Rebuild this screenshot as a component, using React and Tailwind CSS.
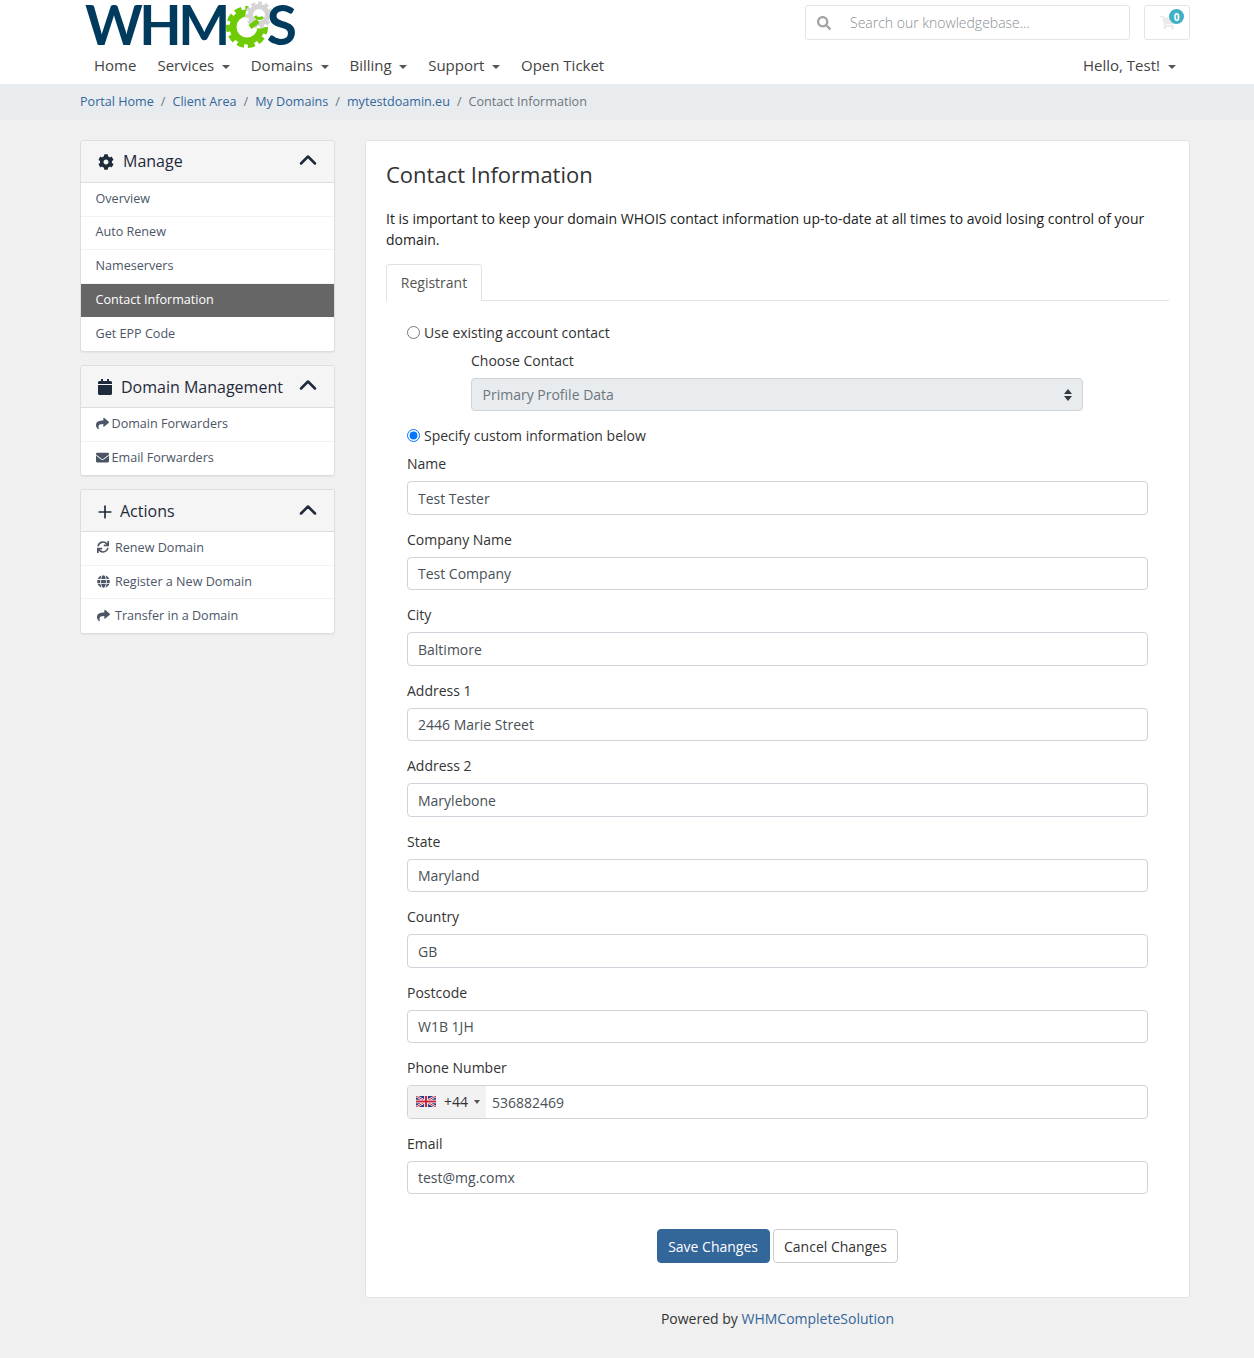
import React from "react";
import { ChevronUp, Plus } from "lucide-react";
import { FaCog, FaCalendar, FaShare, FaEnvelope, FaSync, FaGlobe, FaSearch, FaShoppingCart } from "react-icons/fa";

const fields = [
  ["Name", "Test Tester"],
  ["Company Name", "Test Company"],
  ["City", "Baltimore"],
  ["Address 1", "2446 Marie Street"],
  ["Address 2", "Marylebone"],
  ["State", "Maryland"],
  ["Country", "GB"],
  ["Postcode", "W1B 1JH"],
];

function Caret() {
  return <span className="ml-[7.5px] inline-block border-x-[4px] border-t-[4px] border-x-transparent border-t-[#555] align-middle" />;
}

function Panel({ icon, title, gap = "gap-[9px]", children }) {
  return (
    <div className="mb-[13px] overflow-hidden rounded-[3px] border border-[#ddd] bg-white shadow-[0_1px_1px_rgba(0,0,0,0.05)]">
      <div className={`flex h-[42px] items-center border-b border-[#ddd] bg-[#f5f5f5] pl-[17px] pr-[12px] text-[#1f2a3a] ${gap}`}>
        {icon}
        <span className="text-[16px]">{title}</span>
        <ChevronUp className="ml-auto -translate-y-[2px]" size={28} strokeWidth={2.2} />
      </div>
      {children}
    </div>
  );
}

function Item({ icon, active, last, children }) {
  return (
    <div
      className={`flex h-[33.6px] items-center px-[14.5px] pb-[2px] text-[12.6px] ${
        active ? "bg-[#666] text-white" : "text-[#4c5566]"
      } ${last || active ? "" : "border-b border-[#f3f3f3]"}`}
    >
      {icon}
      {children}
    </div>
  );
}

function GearLogo() {
  return (
    <svg width="48" height="50" viewBox="0 0 48 50" className="-mx-[1px] shrink-0">
      <circle cx="21" cy="27" r="14" fill="none" stroke="#6fcb05" strokeWidth="7" />
      <circle cx="21" cy="27" r="19" fill="none" stroke="#6fcb05" strokeWidth="4" strokeDasharray="7 3.9" />
      <circle cx="33" cy="15" r="13.5" fill="#fff" />
      <circle cx="33" cy="15" r="8.5" fill="none" stroke="#d4d4d4" strokeWidth="5" />
      <circle cx="33" cy="15" r="12" fill="none" stroke="#d4d4d4" strokeWidth="3" strokeDasharray="4 2.9" />
      <path d="M24 27 L32 21" stroke="#6fcb05" strokeWidth="5" />
      <path d="M29 16 a5 5 0 0 0 8 1" fill="none" stroke="#6fcb05" strokeWidth="3" />
    </svg>
  );
}

function UkFlag() {
  return (
    <svg width="20" height="11" viewBox="0 0 60 33">
      <rect width="60" height="33" fill="#2b3f80" />
      <path d="M0 0 L60 33 M60 0 L0 33" stroke="#fff" strokeWidth="7" />
      <path d="M0 0 L60 33 M60 0 L0 33" stroke="#c8283f" strokeWidth="3" />
      <path d="M30 0 V33 M0 16.5 H60" stroke="#fff" strokeWidth="11" />
      <path d="M30 0 V33 M0 16.5 H60" stroke="#c8283f" strokeWidth="6" />
    </svg>
  );
}

const inputCls =
  "block h-[33.5px] w-full rounded-[4px] border border-[#ced4da] bg-white px-[10px] pt-[1px] text-[14px] text-[#495057] outline-none";

export default function App() {
  return (
    <div className="min-h-[1358px] bg-[#f0f0f0] font-['Open_Sans',sans-serif] text-[14px] leading-[21px] text-[#333]">
      <header className="h-[84px] bg-white">
        <div className="ml-[80px] w-[1110px]">
          <div className="flex h-[49px] items-start">
            <div className="ml-[5px] flex h-[49px] items-center font-['Lato',sans-serif] text-[55px] font-bold leading-[49px] tracking-[-3.5px] text-[#003a5d]">
              <span>WHM</span>
              <GearLogo />
              <span className="-ml-[6px]">S</span>
            </div>
            <div className="ml-auto mt-[5px] flex h-[35px] w-[325px] items-center rounded-[3px] border border-[#e4e4e4] bg-white pl-[11px] text-[#a3a3a3]">
              <FaSearch size={14} />
              <span className="ml-[19px] font-light text-[#8a8f96]">Search our knowledgebase...</span>
            </div>
            <div className="relative ml-[14px] mt-[5px] flex h-[35px] w-[46px] items-center justify-center rounded-[3px] border border-[#e4e4e4] bg-white">
              <FaShoppingCart size={15} className="text-[#eaeaea]" />
              <span className="absolute right-[5px] top-[3px] flex h-[15px] w-[15px] items-center justify-center rounded-full bg-[#3fb0c6] text-[10px] font-bold leading-none text-white">
                0
              </span>
            </div>
          </div>
          <nav className="flex h-[33px] items-center pl-[14px] text-[15px] text-[#444]">
            <span>Home</span>
            <span className="ml-[21px]">Services<Caret /></span>
            <span className="ml-[21px]">Domains<Caret /></span>
            <span className="ml-[21px]">Billing<Caret /></span>
            <span className="ml-[21px]">Support<Caret /></span>
            <span className="ml-[21px]">Open Ticket</span>
            <span className="ml-auto mr-[14.5px]">Hello, Test!<Caret /></span>
          </nav>
        </div>
      </header>

      <div className="flex h-[36px] items-center bg-[#e9ecef] pb-[1px] pl-[80px] text-[12.6px]">
        <span className="text-[#336699]">Portal Home</span>
        <span className="px-[7px] text-[#6c757d]">/</span>
        <span className="text-[#336699]">Client Area</span>
        <span className="px-[7px] text-[#6c757d]">/</span>
        <span className="text-[#336699]">My Domains</span>
        <span className="px-[7px] text-[#6c757d]">/</span>
        <span className="text-[#336699]">mytestdoamin.eu</span>
        <span className="px-[7px] text-[#6c757d]">/</span>
        <span className="text-[#6c757d]">Contact Information</span>
      </div>

      <div className="ml-[80px] mt-[20px] flex w-[1110px] items-start gap-[30px]">
        <aside className="w-[255px] shrink-0">
          <Panel icon={<FaCog size={16} />} title="Manage">
            <Item>Overview</Item>
            <Item>Auto Renew</Item>
            <Item>Nameservers</Item>
            <Item active>Contact Information</Item>
            <Item last>Get EPP Code</Item>
          </Panel>
          <Panel icon={<FaCalendar size={16} className="-ml-[1px]" />} title="Domain Management" gap="gap-[8px] pt-[2px]">
            <Item icon={<FaShare size={13} className="mr-[3px]" />}>Domain Forwarders</Item>
            <Item last icon={<FaEnvelope size={13} className="mr-[3px]" />}>Email Forwarders</Item>
          </Panel>
          <Panel icon={<Plus size={20} strokeWidth={2} className="-ml-[3px]" />} title="Actions" gap="gap-[5px] pt-[2px]">
            <Item icon={<FaSync size={12} className="ml-[1px] mr-[6.5px]" />}>Renew Domain</Item>
            <Item icon={<FaGlobe size={13} className="ml-[1px] mr-[5.5px]" />}>Register a New Domain</Item>
            <Item last icon={<FaShare size={13} className="ml-[1px] mr-[5.5px]" />}>Transfer in a Domain</Item>
          </Panel>
        </aside>

        <div className="w-[825px] shrink-0">
          <main className="h-[1158px] rounded-[3px] border border-[#e3e3e3] bg-white px-[20px] pt-[19px]">
            <h1 className="text-[22px] leading-[29px] text-[#333]">Contact Information</h1>
            <p className="mt-[19px] text-[14px] text-[#222]">
              It is important to keep your domain WHOIS contact information up-to-date at all times to avoid losing control of your domain.
            </p>
            <div className="mt-[14px] flex h-[37px] border-b border-[#dee2e6]">
              <div className="h-[37px] w-[96px] rounded-t-[4px] border border-b-0 border-[#dee2e6] bg-white text-center leading-[35px] text-[#555]">
                Registrant
              </div>
            </div>

            <form className="px-[21px]">
              <label className="mt-[21px] flex items-center text-[#333]">
                <input type="radio" name="contact" className="mr-[4px] h-[13px] w-[13px]" />
                Use existing account contact
              </label>
              <div className="ml-[64px] mt-[7px]">
                <div>Choose Contact</div>
                <div className="relative mt-[7px] w-[612px]">
                  <select disabled className="block h-[33px] w-full appearance-none rounded-[4px] border border-[#ced4da] bg-[#e9ecef] px-[10.5px] text-[14px] text-[#6c757d]">
                    <option>Primary Profile Data</option>
                  </select>
                  <svg width="8" height="12" viewBox="0 0 8 12" className="absolute right-[11px] top-[11px]">
                    <path d="M4 0 L8 5 H0 Z M0 7 H8 L4 12 Z" fill="#343a40" />
                  </svg>
                </div>
              </div>
              <label className="mt-[14px] flex items-center text-[#333]">
                <input type="radio" name="contact" defaultChecked className="mr-[4px] h-[13px] w-[13px]" />
                Specify custom information below
              </label>

              <div className="mt-[8px]">
                {fields.map(([label, value]) => (
                  <div key={label} className="mb-[15px]">
                    <div className="mb-[7.5px] leading-[19.5px]">{label}</div>
                    <input readOnly defaultValue={value} className={inputCls} />
                  </div>
                ))}
                <div className="mb-[15px]">
                  <div className="mb-[7.5px] leading-[19.5px]">Phone Number</div>
                  <div className="flex h-[33.5px] overflow-hidden rounded-[4px] border border-[#ced4da] bg-white text-[#495057]">
                    <div className="flex w-[78px] items-center bg-[#f2f2f2] pl-[8px] text-[#333]">
                      <UkFlag />
                      <span className="ml-[8px]">+44</span>
                      <span className="ml-[6px] inline-block border-x-[3px] border-t-[4px] border-x-transparent border-t-[#555]" />
                    </div>
                    <span className="flex items-center pl-[6px] pt-[1px]">536882469</span>
                  </div>
                </div>
                <div className="mb-[16px]">
                  <div className="mb-[7.5px] leading-[19.5px]">Email</div>
                  <input readOnly defaultValue="test@mg.comx" className={inputCls} />
                </div>
              </div>

              <div className="mt-[35px] flex justify-center gap-[3px]">
                <button type="button" className="h-[34px] rounded-[4px] border border-[#336699] bg-[#336699] px-[10.5px] text-[14px] text-white">
                  Save Changes
                </button>
                <button type="button" className="h-[34px] rounded-[4px] border border-[#ccc] bg-white px-[10.5px] text-[14px] text-[#333]">
                  Cancel Changes
                </button>
              </div>
            </form>
          </main>
          <footer className="mt-[10px] text-center text-[#333]">
            Powered by <span className="text-[#336699]">WHMCompleteSolution</span>
          </footer>
        </div>
      </div>
    </div>
  );
}
